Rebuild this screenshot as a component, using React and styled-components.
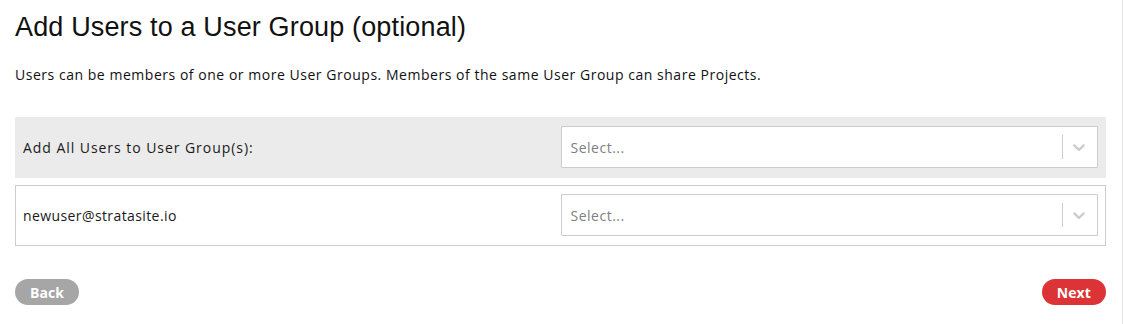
import styled, { createGlobalStyle } from 'styled-components';

const GlobalStyle = createGlobalStyle`
  html, body {
    margin: 0;
    padding: 0;
    background: #fff;
  }
  body {
    font-family: 'Open Sans', 'Liberation Sans', Arial, sans-serif;
    color: #1a1a1a;
  }
`;

export default function App() {
  const users = ['newuser@stratasite.io'];
  return (
    <>
      <GlobalStyle />
      <Page>
        <Title>Add Users to a User Group (optional)</Title>
        <Intro>
          Users can be members of one or more User Groups. Members of the same User Group can share Projects.
        </Intro>
        <Rows>
          <Row $shaded>
            <Label $wide>Add All Users to User Group(s):</Label>
            <Select />
          </Row>
          {users.map((u) => (
            <Row key={u}>
              <Label>{u}</Label>
              <Select />
            </Row>
          ))}
        </Rows>
        <Footer>
          <Pill $color="#a6a6a6">Back</Pill>
          <Pill $color="#dc3436">Next</Pill>
        </Footer>
      </Page>
    </>
  );
}

function Select() {
  return (
    <SelectBox>
      <Placeholder>Select...</Placeholder>
      <Indicators>
        <Separator />
        <Chevron>
          <svg width="20" height="20" viewBox="0 0 20 20" fill="currentColor">
            <path d="M4.516 7.548c0.436-0.446 1.043-0.481 1.576 0l3.908 3.747 3.908-3.747c0.533-0.481 1.141-0.446 1.574 0 0.436 0.445 0.408 1.197 0 1.615-0.406 0.418-4.695 4.502-4.695 4.502-0.217 0.223-0.502 0.335-0.787 0.335s-0.57-0.112-0.789-0.335c0 0-4.287-4.084-4.695-4.502s-0.436-1.170 0-1.615z" />
          </svg>
        </Chevron>
      </Indicators>
    </SelectBox>
  );
}

const Page = styled.div`
  box-sizing: border-box;
  width: 1123px;
  height: 324px;
  padding: 11px 16px 0 15px;
  border-right: 1px solid #e3e3e3;
`;

const Title = styled.h1`
  margin: 0;
  font-family: 'Liberation Sans', Arial, sans-serif;
  font-size: 27px;
  font-weight: 400;
  line-height: 32px;
  letter-spacing: 0.15px;
  color: #111;
`;

const Intro = styled.p`
  margin: 23px 0 0;
  font-size: 14px;
  line-height: 18px;
  letter-spacing: 0.53px;
  color: #111;
`;

const Rows = styled.div`
  display: flex;
  flex-direction: column;
  gap: 7px;
  margin-top: 33px;
`;

const Row = styled.div`
  display: grid;
  grid-template-columns: 1fr 1fr;
  align-items: center;
  padding: 8px 7px 9px 7px;
  background: ${(p) => (p.$shaded ? '#ebebeb' : '#fff')};
  border: 1px solid ${(p) => (p.$shaded ? '#ebebeb' : '#cccccc')};
`;

const Label = styled.div`
  font-size: 14px;
  letter-spacing: ${(p) => (p.$wide ? '0.95px' : '0.4px')};
  color: #1a1a1a;
`;

const SelectBox = styled.div`
  box-sizing: border-box;
  display: flex;
  align-items: center;
  height: 42px;
  background: #fff;
  border: 1px solid #cccccc;
  border-radius: 1px;
`;

const Placeholder = styled.div`
  flex: 1;
  padding: 0 9px;
  font-size: 14px;
  letter-spacing: 0.5px;
  color: #808080;
`;

const Indicators = styled.div`
  display: flex;
  align-items: center;
  align-self: stretch;
`;

const Separator = styled.span`
  width: 1px;
  align-self: stretch;
  margin: 8px 0;
  background: #cccccc;
`;

const Chevron = styled.div`
  display: flex;
  padding: 8px 8px 8px 6px;
  color: #cccccc;
`;

const Footer = styled.div`
  display: flex;
  justify-content: space-between;
  margin-top: 33px;
`;

const Pill = styled.button`
  height: 26px;
  padding: 0 15px;
  border: none;
  border-radius: 13px;
  background: ${(p) => p.$color};
  color: #fff;
  font-family: 'Open Sans', 'Liberation Sans', Arial, sans-serif;
  font-size: 14px;
  font-weight: 700;
  letter-spacing: 0.1px;
  cursor: pointer;
`;
